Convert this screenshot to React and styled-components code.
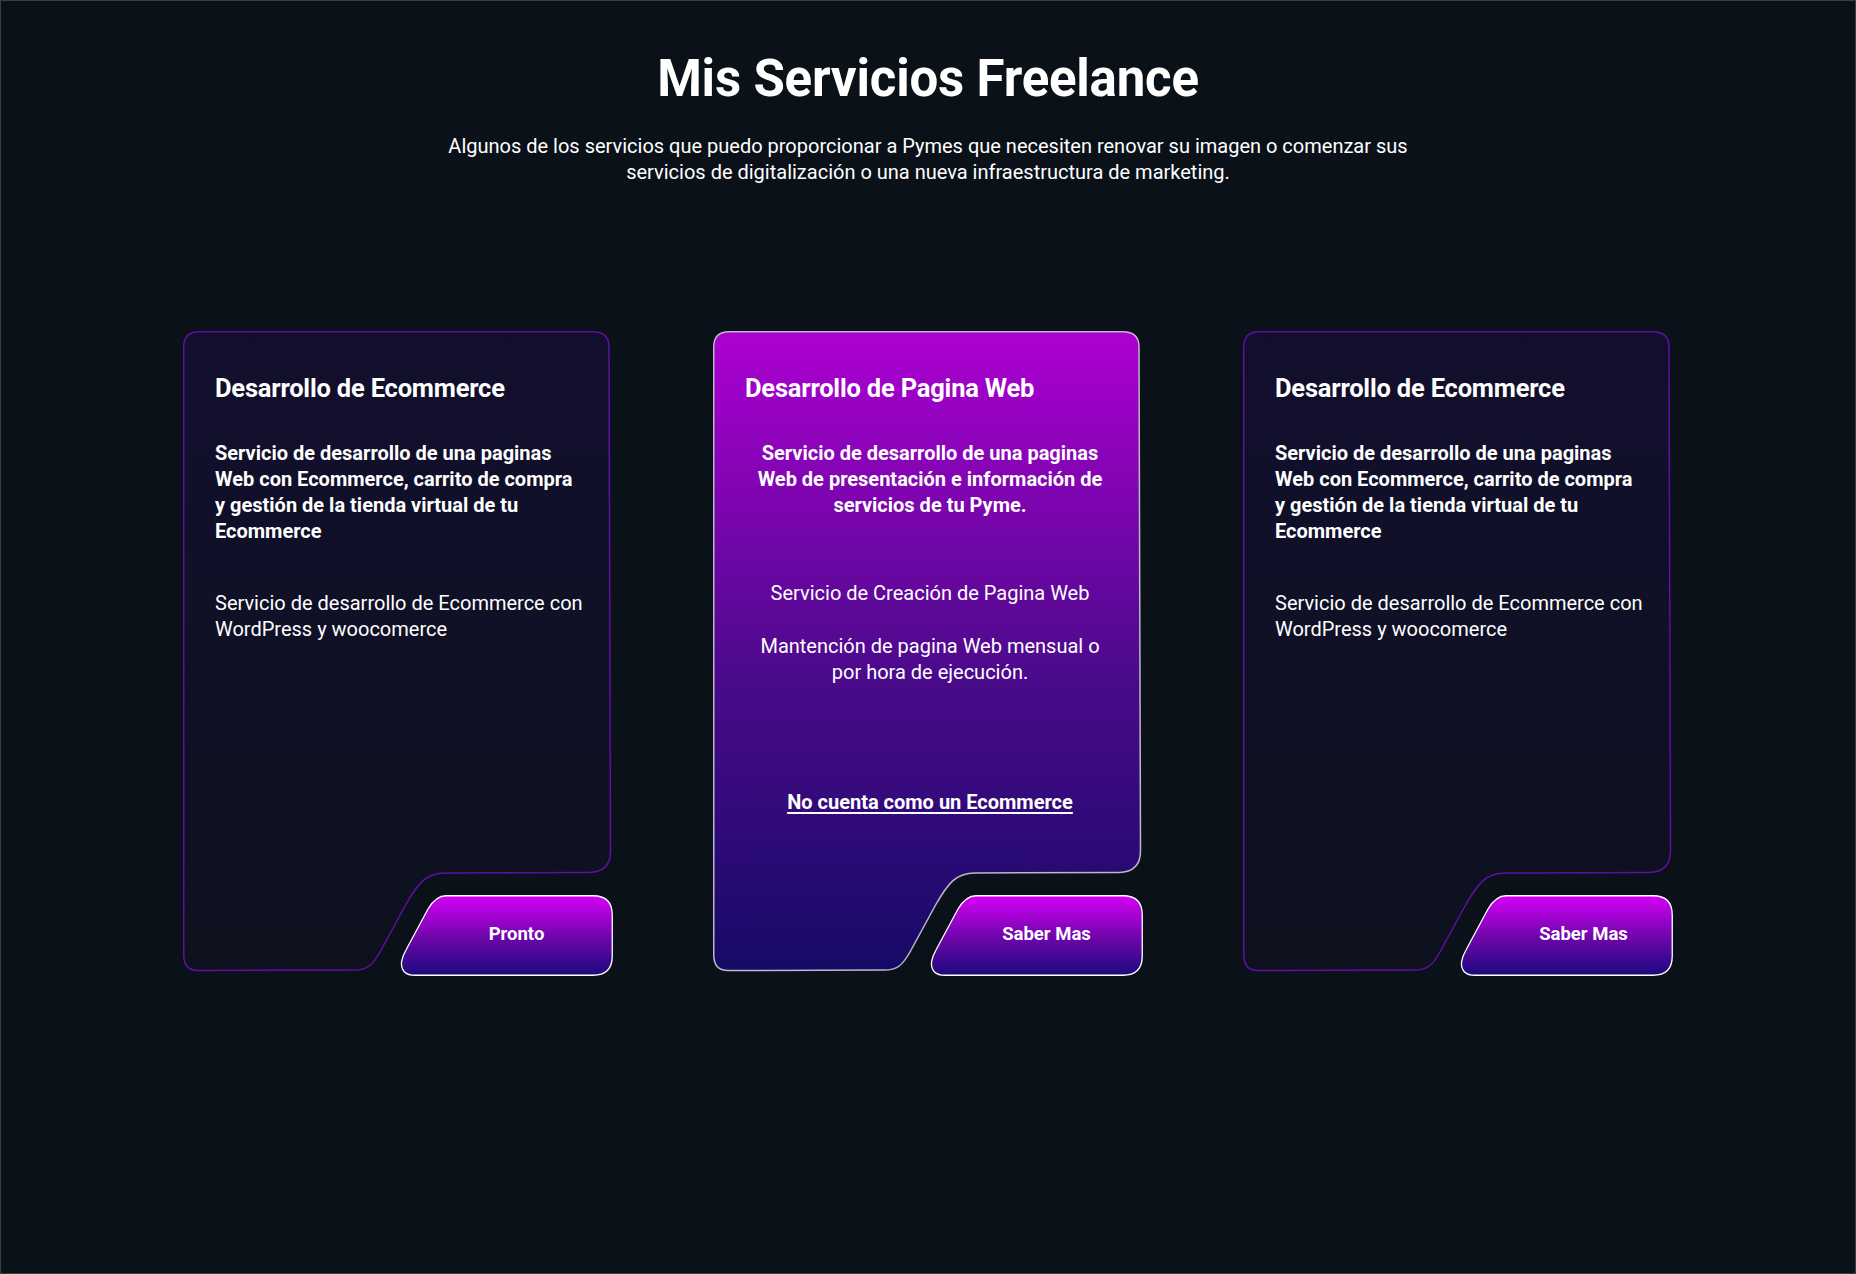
import React from "react";
import styled, { createGlobalStyle } from "styled-components";

// ========== global ==========
const GlobalStyle = createGlobalStyle`
  * {
    box-sizing: border-box;
  }
  body {
    margin: 0;
    background-color: #0b1119;
    font-family: Roboto, "Liberation Sans", sans-serif;
    color: #ffffff;
  }
`;

// ========== css: styled components ==========
const Page = styled.main`
  min-height: 100vh;
  padding: 44px 0 80px;
  background-color: #0b1119;
  border: 1px solid #3a3d42;
`;

// __________ header __________
const Header = styled.header`
  display: flex;
  flex-direction: column;
  align-items: center;
  text-align: center;
`;

const Title = styled.h1`
  margin: 0;
  font-size: 51px;
  line-height: 68px;
  font-weight: 700;
  letter-spacing: -0.2px;
`;

const Subtitle = styled.p`
  margin: 20px 0 0;
  max-width: 1000px;
  font-size: 20px;
  line-height: 26px;
  font-weight: 400;
`;

// __________ cards __________
const CardsRow = styled.section`
  margin-top: 146px;
  display: flex;
  justify-content: center;
  gap: 100px;
`;

const Card = styled.article`
  position: relative;
  width: 430px;
  height: 645px;
  display: flex;
  flex-direction: column;
`;

const ShapeLayer = styled.svg`
  position: absolute;
  inset: 0;
  z-index: 0;
  pointer-events: none;
`;

const CardBody = styled.div`
  position: relative;
  z-index: 1;
  flex: 1;
  padding: 43px 28px 0 32px;
  display: flex;
  flex-direction: column;
`;

const CardTitle = styled.h2`
  margin: 0;
  font-size: 25.5px;
  line-height: 28px;
  font-weight: 700;
  letter-spacing: -0.2px;
`;

const Lead = styled.p`
  margin: 38px 0 0;
  padding: 0 ${(p) => (p.$center ? "4px" : "0")};
  font-size: 20px;
  line-height: 26px;
  font-weight: 700;
  text-align: ${(p) => (p.$center ? "center" : "left")};
`;

const Text = styled.p`
  margin: ${(p) => p.$gap || "46px"} 0 0;
  font-size: 20px;
  line-height: 26px;
  font-weight: 400;
  text-align: ${(p) => (p.$center ? "center" : "left")};
`;

const CardLink = styled.a`
  margin-top: 104px;
  align-self: center;
  font-size: 20px;
  line-height: 26px;
  font-weight: 700;
  color: #ffffff;
  text-decoration: underline;
  text-underline-offset: 3px;
  cursor: pointer;
`;

const CardFooter = styled.div`
  position: relative;
  z-index: 1;
  height: 81px;
  display: flex;
  justify-content: flex-end;
`;

const ActionButton = styled.button`
  position: relative;
  width: 213px;
  height: 81px;
  padding: 0 0 3px ${(p) => p.$shift || 20}px;
  border: none;
  background: transparent;
  display: flex;
  align-items: center;
  justify-content: center;
  font-family: Roboto, "Liberation Sans", sans-serif;
  font-size: 18.5px;
  font-weight: 700;
  color: #ffffff;
  cursor: pointer;
`;

const ButtonShape = styled.svg`
  position: absolute;
  inset: 0;
  pointer-events: none;
`;

const ButtonLabel = styled.span`
  position: relative;
`;

// ========== drawings ==========
const CARD_PATH =
  "M16 0.75 L410 0.75 Q426 0.75 426 16 L427.5 520 Q427.5 541 406 541.5 L262 542 C243 542 235 552 222 575 L197 621 C189 635 184 639 171 639 L15 639.5 Q0.75 639.5 0.75 624 L0.75 16 Q0.75 0.75 16 0.75 Z";

const CardShape = ({ featured, id }) => (
  <ShapeLayer width="430" height="645" viewBox="0 0 430 645">
    <defs>
      <linearGradient id={id} x1="0" y1="0" x2="0" y2="1">
        {featured ? (
          <>
            <stop offset="0" stopColor="#ad00d2" />
            <stop offset="0.55" stopColor="#490a8a" />
            <stop offset="1" stopColor="#160a66" />
          </>
        ) : (
          <>
            <stop offset="0" stopColor="#120f2e" />
            <stop offset="1" stopColor="#0d111d" />
          </>
        )}
      </linearGradient>
    </defs>
    <path
      d={CARD_PATH}
      fill={`url(#${id})`}
      stroke={featured ? "#bdb6cc" : "#5c10a8"}
      strokeWidth="1.5"
    />
  </ShapeLayer>
);

const BUTTON_PATH =
  "M46 0.75 L193 0.75 Q212.25 0.75 212.25 20 L212.25 61 Q212.25 80.25 193 80.25 L15 80.25 Q0.75 80.25 1.5 67 Q2.5 61 6 55 L28 14 Q36 0.75 46 0.75 Z";

const ButtonBg = ({ id }) => (
  <ButtonShape width="213" height="81" viewBox="0 0 213 81">
    <defs>
      <linearGradient id={id} x1="0" y1="0" x2="0" y2="1">
        <stop offset="0" stopColor="#d600f6" />
        <stop offset="0.55" stopColor="#6a06a8" />
        <stop offset="1" stopColor="#1c0a7e" />
      </linearGradient>
    </defs>
    <path d={BUTTON_PATH} fill={`url(#${id})`} stroke="#ffffff" strokeWidth="1.3" />
  </ButtonShape>
);

// ========== component ==========
const App = () => {
  return (
    <Page>
      <GlobalStyle />
      {/* ========== header ========== */}
      <Header>
        <Title>Mis Servicios Freelance</Title>
        <Subtitle>
          Algunos de los servicios que puedo proporcionar a Pymes que necesiten renovar su imagen o
          comenzar sus servicios de digitalización o una nueva infraestructura de marketing.
        </Subtitle>
      </Header>

      {/* ========== cards ========== */}
      <CardsRow>
        <Card>
          <CardShape id="card-a" />
          <CardBody>
            <CardTitle>Desarrollo de Ecommerce</CardTitle>
            <Lead>
              Servicio de desarrollo de una paginas Web con Ecommerce, carrito de compra y gestión
              de la tienda virtual de tu Ecommerce
            </Lead>
            <Text>Servicio de desarrollo de Ecommerce con WordPress y woocomerce</Text>
          </CardBody>
          <CardFooter>
            <ActionButton $shift={20}>
              <ButtonBg id="btn-a" />
              <ButtonLabel>Pronto</ButtonLabel>
            </ActionButton>
          </CardFooter>
        </Card>

        <Card>
          <CardShape id="card-b" featured />
          <CardBody>
            <CardTitle>Desarrollo de Pagina Web</CardTitle>
            <Lead $center>
              Servicio de desarrollo de una paginas Web de presentación e información de servicios
              de tu Pyme.
            </Lead>
            <Text $center $gap="62px">
              Servicio de Creación de Pagina Web
            </Text>
            <Text $center $gap="27px">
              Mantención de pagina Web mensual o por hora de ejecución.
            </Text>
            <CardLink>No cuenta como un Ecommerce</CardLink>
          </CardBody>
          <CardFooter>
            <ActionButton $shift={20}>
              <ButtonBg id="btn-b" />
              <ButtonLabel>Saber Mas</ButtonLabel>
            </ActionButton>
          </CardFooter>
        </Card>

        <Card>
          <CardShape id="card-c" />
          <CardBody>
            <CardTitle>Desarrollo de Ecommerce</CardTitle>
            <Lead>
              Servicio de desarrollo de una paginas Web con Ecommerce, carrito de compra y gestión
              de la tienda virtual de tu Ecommerce
            </Lead>
            <Text>Servicio de desarrollo de Ecommerce con WordPress y woocomerce</Text>
          </CardBody>
          <CardFooter>
            <ActionButton $shift={34}>
              <ButtonBg id="btn-c" />
              <ButtonLabel>Saber Mas</ButtonLabel>
            </ActionButton>
          </CardFooter>
        </Card>
      </CardsRow>
    </Page>
  );
};

export default App;
